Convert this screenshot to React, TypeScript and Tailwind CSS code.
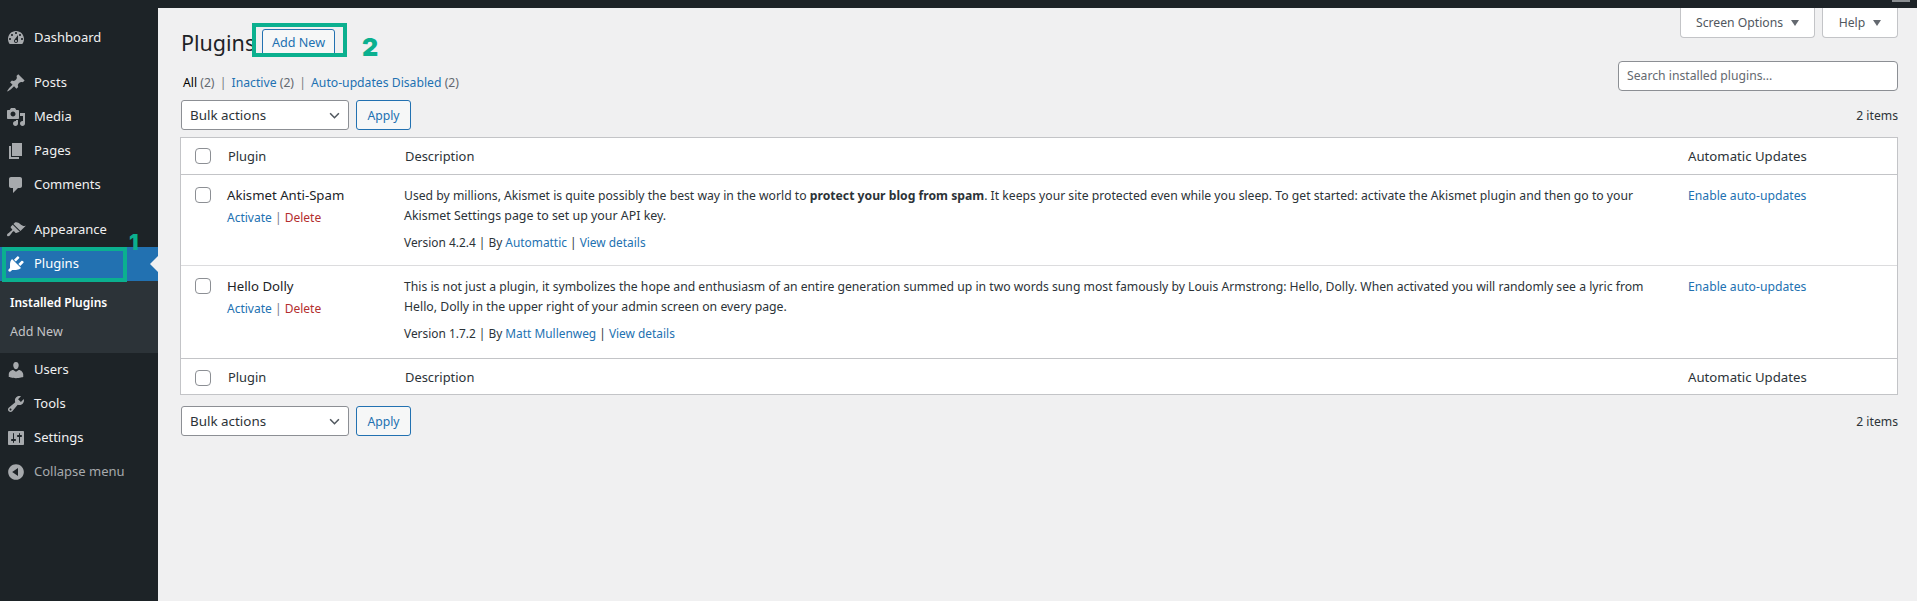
const icons: Record<string, string> = {
  dashboard: 'M3.76 16h12.48c1.1-1.37 1.76-3.11 1.76-5 0-4.42-3.58-8-8-8s-8 3.58-8 8c0 1.89.66 3.63 1.76 5zM10 4c.55 0 1 .45 1 1s-.45 1-1 1-1-.45-1-1 .45-1 1-1zM6 6c.55 0 1 .45 1 1s-.45 1-1 1-1-.45-1-1 .45-1 1-1zm8 0c.55 0 1 .45 1 1s-.45 1-1 1-1-.45-1-1 .45-1 1-1zm-5.37 5.55L12 7v6c0 1.1-.9 2-2 2s-2-.9-2-2c0-.57.24-1.08.63-1.45zM4 10c.55 0 1 .45 1 1s-.45 1-1 1-1-.45-1-1 .45-1 1-1zm12 0c.55 0 1 .45 1 1s-.45 1-1 1-1-.45-1-1 .45-1 1-1zm-5 3c0-.55-.45-1-1-1s-1 .45-1 1 .45 1 1 1 1-.45 1-1z',
  posts: 'M10.44 3.02l1.82-1.82 6.36 6.35-1.83 1.82c-1.05-.68-2.48-.57-3.41.36l-.75.75c-.92.93-1.04 2.35-.35 3.41l-1.83 1.82-2.41-2.41-2.8 2.79c-.42.42-3.38 2.71-3.8 2.29s1.86-3.39 2.28-3.81l2.79-2.79L4.1 9.36l1.83-1.82c1.05.69 2.48.57 3.4-.36l.75-.75c.93-.92 1.05-2.35.36-3.41z',
  media: 'M13 11V4c0-.55-.45-1-1-1h-1.67L9 1H5L3.67 3H2c-.55 0-1 .45-1 1v7c0 .55.45 1 1 1h10c.55 0 1-.45 1-1zM7 4.5c1.38 0 2.5 1.12 2.5 2.5S8.38 9.5 7 9.5 4.5 8.38 4.5 7 5.62 4.5 7 4.5zM14 6h5v10.5c0 1.38-1.12 2.5-2.5 2.5S14 17.88 14 16.5s1.12-2.5 2.5-2.5c.17 0 .34.02.5.05V9h-3V6zm-4 8.05V13h2v3.5c0 1.38-1.12 2.5-2.5 2.5S7 17.88 7 16.5 8.12 14 9.5 14c.17 0 .34.02.5.05z',
  pages: 'M6 15V2h10v13H6zm-1 1h8v2H3V5h2v11z',
  comments: 'M5 2h9c1.1 0 2 .9 2 2v7c0 1.1-.9 2-2 2h-2l-5 5v-5H5c-1.1 0-2-.9-2-2V4c0-1.1.9-2 2-2z',
  appearance: 'M14.48 11.06L7.41 3.99l1.5-1.5c.5-.56 2.3-.47 3.51.32 1.21.8 1.43 1.28 2.91 2.1 1.18.64 2.45 1.26 4.45.85zm-.71.71L6.7 4.7 4.93 6.47c-.39.39-.39 1.02 0 1.41l1.06 1.06c.39.39.39 1.03 0 1.42-.6.6-1.43 1.11-2.21 1.69-.35.26-.7.53-1.01.84C1.43 13.23.4 14.95 1.36 15.91c.95.95 2.68-.07 3.02-1.07.31-.31.58-.66.84-1.01.58-.78 1.09-1.61 1.69-2.21.39-.39 1.02-.39 1.41 0l1.06 1.06c.39.39 1.02.39 1.41 0z',
  plugins: 'M13.11 4.36L9.87 7.6 8 5.73l3.24-3.24c.35-.34 1.05-.2 1.56.32.52.51.66 1.21.31 1.55zm-8 1.77l.91-1.12 9.01 9.01-1.19.84c-.71.71-2.63 1.16-3.82 1.16H6.14L4.9 17.26c-.59.59-1.54.59-2.12 0-.59-.58-.59-1.53 0-2.12l1.24-1.24v-3.88c0-1.13.4-3.19 1.09-3.89zm7.26 3.97l3.24-3.24c.34-.35 1.04-.21 1.55.31.52.51.66 1.21.31 1.55l-3.24 3.25z',
  users: 'M10 9.25c-2.27 0-2.73-3.44-2.73-3.44C7 4.02 7.82 2 9.97 2c2.16 0 2.98 2.02 2.71 3.81 0 0-.41 3.44-2.68 3.44zm0 2.57L12.72 10c2.39 0 4.52 2.33 4.52 4.53v2.49s-3.65 1.13-7.24 1.13c-3.65 0-7.24-1.13-7.24-1.13v-2.49c0-2.25 1.94-4.48 4.47-4.48z',
  tools: 'M16.68 9.77c-1.34 1.34-3.3 1.67-4.95.99l-5.41 6.52c-.99.99-2.59.99-3.58 0s-.99-2.59 0-3.57l6.52-5.42c-.68-1.65-.35-3.61.99-4.95 1.28-1.28 3.12-1.62 4.72-1.06l-2.89 2.89 2.82 2.82 2.86-2.87c.53 1.58.18 3.39-1.08 4.65zM3.81 16.21c.4.39 1.04.39 1.43 0 .4-.4.4-1.04 0-1.43-.39-.4-1.03-.4-1.43 0-.39.39-.39 1.03 0 1.43z',
  settings: 'M18 16V4c0-.55-.45-1-1-1H3c-.55 0-1 .45-1 1v12c0 .55.45 1 1 1h14c.55 0 1-.45 1-1zM8 11h1c.55 0 1 .45 1 1s-.45 1-1 1H8v1.5c0 .28-.22.5-.5.5s-.5-.22-.5-.5V13H6c-.55 0-1-.45-1-1s.45-1 1-1h1V5.5c0-.28.22-.5.5-.5s.5.22.5.5V11zm5-2h-1c-.55 0-1-.45-1-1s.45-1 1-1h1V5.5c0-.28.22-.5.5-.5s.5.22.5.5V7h1c.55 0 1 .45 1 1s-.45 1-1 1h-1v5.5c0 .28-.22.5-.5.5s-.5-.22-.5-.5V9z',
  collapse: 'M10 2.16c4.33 0 7.84 3.51 7.84 7.84s-3.51 7.84-7.84 7.84S2.16 14.33 2.16 10 5.71 2.16 10 2.16zm2 11.72V6.12L6.18 9.97z',
};

function Dashicon({ name, className }: { name: string; className?: string }) {
  return (
    <svg viewBox="0 0 20 20" className={`w-5 h-5 fill-current ${className ?? ''}`}>
      <path d={icons[name]} />
    </svg>
  );
}

function MenuItem({ icon, label, active, dim, className }: { icon: string; label: string; active?: boolean; dim?: boolean; className?: string }) {
  return (
    <div className={`relative flex items-center h-[34px] pl-[6px] gap-2 ${active ? 'bg-[#2271b1] text-white' : dim ? 'text-[#a7aaad]' : 'text-[#f0f0f1]'} ${className ?? ''}`}>
      <Dashicon name={icon} className={active ? 'text-white' : 'text-[#a7aaad]'} />
      <span>{label}</span>
      {active && (
        <div className="absolute right-0 top-[9px] w-0 h-0 border-y-[8px] border-y-transparent border-r-[8px] border-r-[#f0f0f1]" />
      )}
    </div>
  );
}

function Sidebar() {
  return (
    <aside className="w-[158px] shrink-0 bg-[#1d2327] text-[13px] pt-[13px]">
      <MenuItem icon="dashboard" label="Dashboard" />
      <MenuItem icon="posts" label="Posts" className="mt-[11px]" />
      <MenuItem icon="media" label="Media" />
      <MenuItem icon="pages" label="Pages" />
      <MenuItem icon="comments" label="Comments" />
      <MenuItem icon="appearance" label="Appearance" className="mt-[11px]" />
      <MenuItem icon="plugins" label="Plugins" active />
      <div className="bg-[#2c3338] h-[72px] pt-[7px] pl-[10px] text-[12px]">
        <div className="h-[30px] flex items-center font-semibold text-white">Installed Plugins</div>
        <div className="h-[28px] flex items-center text-[12.5px] text-[#c3c4c7]">Add New</div>
      </div>
      <MenuItem icon="users" label="Users" />
      <MenuItem icon="tools" label="Tools" />
      <MenuItem icon="settings" label="Settings" />
      <MenuItem icon="collapse" label="Collapse menu" dim />
    </aside>
  );
}

function Check() {
  return <div className="w-4 h-4 rounded-[4px] border border-[#8c8f94] bg-white shrink-0" />;
}

function Caret() {
  return <div className="w-0 h-0 border-x-[4px] border-x-transparent border-t-[6px] border-t-[#646970]" />;
}

function BulkBar() {
  return (
    <div className="flex items-center gap-[7px]">
      <div className="w-[168px] h-[30px] pt-[1px] rounded-[3px] border border-[#8c8f94] bg-white flex items-center justify-between px-[8px] text-[13.4px] text-[#2c3338]">
        <span>Bulk actions</span>
        <svg viewBox="0 0 12 8" className="w-[11px] h-[7px] fill-none stroke-[#50575e] stroke-[1.8]">
          <path d="M1 1.5l5 5 5-5" />
        </svg>
      </div>
      <div className="w-[55px] h-[30px] pt-[2px] rounded-[3px] border border-[#2271b1] bg-[#f6f7f7] text-[#2271b1] flex items-center justify-center">
        Apply
      </div>
    </div>
  );
}

function PluginRow({ name, lineOne, lineTwo, version, author, first }: { name: string; lineOne: React.ReactNode; lineTwo: string; version: string; author: string; first?: boolean }) {
  return (
    <div className={`flex bg-white ${first ? 'h-[91px] border-b border-[#dcdcde]' : 'h-[93px] border-b border-[#c3c4c7]'}`}>
      <div className="w-[46px] pl-[14px] pt-[12px]">
        <Check />
      </div>
      <div className="w-[177px] pt-[11px]">
        <div className="text-[13.2px] text-[#1d2327] leading-[18px]">{name}</div>
        <div className="mt-[5px] leading-[18px] text-[12px]">
          <span className="text-[#2271b1]">Activate</span>
          <span className="text-[#787c82]"> | </span>
          <span className="text-[#b32d2e]">Delete</span>
        </div>
      </div>
      <div className="flex-1 pt-[11px] text-[#2c3338]">
        <div className="leading-[20px] text-[12.2px]">{lineOne}</div>
        <div className={`leading-[20px] ${first ? 'text-[12.4px]' : 'text-[12.25px]'}`}>{lineTwo}</div>
        <div className="leading-[20px] text-[11.9px] mt-[6px]">
          Version {version} | By <span className="text-[#2271b1]">{author}</span> | <span className="text-[#2271b1]">View details</span>
        </div>
      </div>
      <div className="w-[209px] pt-[11px] leading-[20px] text-[#2271b1]">Enable auto-updates</div>
    </div>
  );
}

function HeadRow({ foot }: { foot?: boolean }) {
  return (
    <div className={`flex items-center bg-white text-[12.9px] text-[#2c3338] ${foot ? 'h-[35px] pt-[2px]' : 'h-[37px] border-b border-[#c3c4c7]'}`}>
      <div className="w-[46px] pl-[14px]">
        <Check />
      </div>
      <div className="w-[177px] pl-[1px] pt-[1px]">Plugin</div>
      <div className="flex-1 pl-[1px] pt-[1px]">Description</div>
      <div className="w-[209px] pt-[1px] text-[13.2px]">Automatic Updates</div>
    </div>
  );
}

export default function App() {
  return (
    <div className="relative w-full h-[601px] overflow-hidden bg-[#f0f0f1] font-['Noto_Sans',sans-serif] text-[12.2px]">
      <div className="relative h-2 bg-[#1d2327]">
        <div className="absolute right-[7px] top-0 w-[18px] h-[2px] bg-[#8a8e91]" />
      </div>
      <div className="flex h-[593px]">
        <Sidebar />
        <main className="flex-1 pl-[23px] pr-[19px] relative">
          {/* Screen options tabs */}
          <div className="absolute right-[19px] top-0 flex gap-[7px] text-[#50575e]">
            <div className="w-[135px] h-[30px] pt-[1px] bg-white border border-t-0 border-[#c3c4c7] rounded-b-[4px] flex items-center justify-center gap-2">
              Screen Options <Caret />
            </div>
            <div className="w-[76px] h-[30px] pt-[1px] bg-white border border-t-0 border-[#c3c4c7] rounded-b-[4px] flex items-center justify-center gap-2">
              Help <Caret />
            </div>
          </div>

          <div className="flex items-center h-[28px] mt-[21px]">
            <h1 className="text-[21.5px] text-[#1d2327] w-[81px]">Plugins</h1>
            <div className="w-[73px] h-[28px] rounded-[3px] border border-[#2271b1] bg-[#f6f7f7] text-[12.6px] text-[#2271b1] flex items-center justify-center">
              Add New
            </div>
          </div>

          <div className="flex items-start justify-between mt-[4px] h-[30px]">
            <div className="pt-[12px] pl-[2px] leading-[20px] text-[#646970]">
              <span className="text-black">All</span> (2) <span className="text-[#787c82] mx-[2px]">|</span>{' '}
              <span className="text-[#2271b1]">Inactive</span> (2) <span className="text-[#787c82] mx-[2px]">|</span>{' '}
              <span className="text-[#2271b1]">Auto-updates Disabled</span> (2)
            </div>
            <div className="w-[280px] h-[30px] pt-[1px] rounded-[4px] border border-[#8c8f94] bg-white flex items-center pl-[8px] text-[#646970]">
              Search installed plugins...
            </div>
          </div>

          <div className="flex items-center justify-between mt-[9px]">
            <BulkBar />
            <span className="pt-[2px] text-[#2c3338]">2 items</span>
          </div>

          <div className="mt-[7px] -ml-[1px] border border-[#c3c4c7]">
            <HeadRow />
            <PluginRow
              name="Akismet Anti-Spam"
              version="4.2.4"
              author="Automattic"
              first
              lineOne={
                <>
                  Used by millions, Akismet is quite possibly the best way in the world to <strong>protect your blog from spam</strong>. It keeps your site protected even while you sleep. To get started: activate the Akismet plugin and then go to your
                </>
              }
              lineTwo="Akismet Settings page to set up your API key."
            />
            <PluginRow
              name="Hello Dolly"
              version="1.7.2"
              author="Matt Mullenweg"
              lineOne="This is not just a plugin, it symbolizes the hope and enthusiasm of an entire generation summed up in two words sung most famously by Louis Armstrong: Hello, Dolly. When activated you will randomly see a lyric from"
              lineTwo="Hello, Dolly in the upper right of your admin screen on every page."
            />
            <HeadRow foot />
          </div>

          <div className="flex items-center justify-between mt-[11px]">
            <BulkBar />
            <span className="pt-[2px] text-[#2c3338]">2 items</span>
          </div>
        </main>
      </div>

      {/* Annotations drawn on top of the screenshot */}
      <div className="absolute left-[2px] top-[247px] w-[125px] h-[35px] border-[4px] border-[#0bb08f]" />
      <div className="absolute left-[252px] top-[23px] w-[95px] h-[34px] border-[4px] border-[#0bb08f]" />
      <div className="absolute left-[129px] top-[231px] text-[21px] leading-[24px] font-black text-[#0bb08f] font-['Inter',sans-serif]">1</div>
      <div className="absolute left-[362px] top-[33px] text-[25px] leading-[28px] font-black text-[#0bb08f] font-['Inter',sans-serif]">2</div>
    </div>
  );
}
